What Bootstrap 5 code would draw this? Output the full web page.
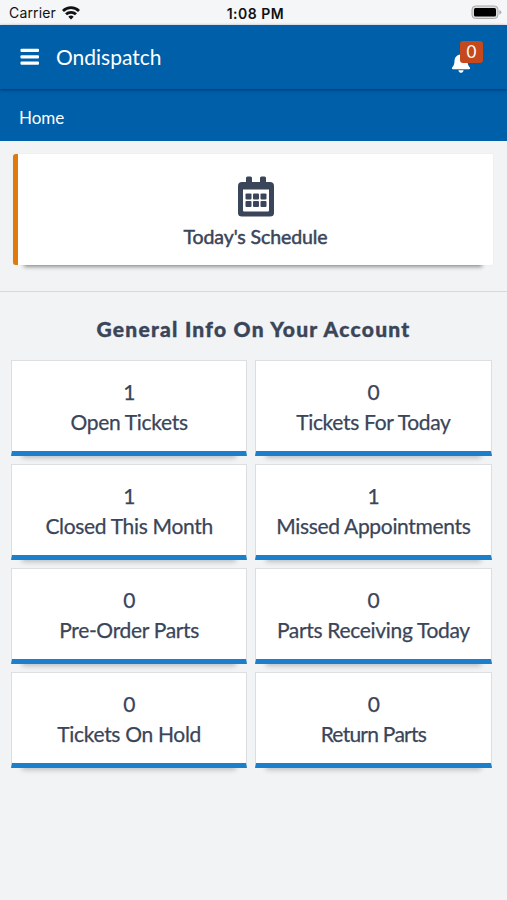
<!DOCTYPE html>
<html lang="en">
<head>
<meta charset="utf-8">
<meta name="viewport" content="width=device-width, initial-scale=1">
<title>Ondispatch</title>
<link href="https://cdn.jsdelivr.net/npm/bootstrap@5.3.0/dist/css/bootstrap.min.css" rel="stylesheet">
<style>
body{background:#f1f3f5;color:#3a4559;font-family:Lato,"Liberation Sans",sans-serif;min-height:900px;overflow-x:hidden}
.status{height:25px;background:#f5f6f8;color:#111;font:14px/27px Inter,sans-serif;padding:0 5px 0 9px}
.status>*{flex:1 1 0}
.carrier{letter-spacing:.15px}
.clock{font-weight:600;font-size:14px;letter-spacing:.5px}
.topbar{height:64px;background:#005fa9;padding:0 24px 0 20px;box-shadow:0 1px 3px rgba(0,25,70,.6);z-index:2}
.brand{font-size:21px;line-height:30px;margin-left:16px}
.bell{width:32px;height:42px}
.bell svg{position:absolute;left:0;top:16px}
.count{position:absolute;left:9px;top:5px;width:23px;height:22px;border-radius:3px;background:#c6481d;font-size:17px;line-height:21px;text-align:center}
.crumb{height:52px;background:#005fa9;padding:5px 19px 0;font-size:17px}
.schedule{height:111px;margin:13px 14px 0 13px;background:#fff;border-left:5px solid #e07a0c;border-radius:3px 1px 1px 3px;box-shadow:0 13px 4px -11px rgba(0,0,0,.4),0 0 1px rgba(0,0,0,.15)}
.schedule svg{margin-top:22px}
.label{font-size:21px;line-height:30px;letter-spacing:-.32px;-webkit-text-stroke:.25px currentColor;white-space:nowrap}
.schedule .label{font-size:19.5px;line-height:26px;margin-top:7px;letter-spacing:-.1px;-webkit-text-stroke-width:.5px}
.rule{height:1px;background:#d5d8db;margin-top:26px}
.heading{font-size:21px;line-height:28px;font-weight:900;letter-spacing:1.25px;-webkit-text-stroke:.4px currentColor;margin:23px 0 17px}
.tiles{display:grid;grid-template-columns:1fr 1fr;gap:8px;padding:0 15.5px 0 11px}
.tile{height:96px;background:#fff;border:1px solid #dcdfe2;border-bottom:5px solid #1b7fcc;padding-top:16px;box-shadow:0 13px 5px -11px rgba(0,0,0,.22)}
.tile:last-child{letter-spacing:-.75px}
</style>
<script src="https://cdn.jsdelivr.net/npm/bootstrap@5.3.0/dist/js/bootstrap.bundle.min.js"></script>
</head>
<body>
<div class="status d-flex">
  <div class="carrier d-flex align-items-center"><span>Carrier</span>
    <svg width="18" height="14" style="margin-left:6px" viewBox="0 0 18 14" fill="none" stroke="#111" stroke-width="2.8"><path d="M1 4.900a11.500 11.500 0 0 1 16 0M4 8.300a7.200 7.200 0 0 1 10 0"/><path d="M6.300 10.700a4 4 0 0 1 5.400 0L9 13.600z" fill="#111" stroke="none"/></svg>
  </div>
  <div class="clock text-center">1:08 PM</div>
  <div class="d-flex align-items-center justify-content-end">
    <svg width="31" height="15" viewBox="0 0 31 15"><rect x="1" y="1" width="26" height="12.5" rx="3.500" fill="#ddd" stroke="#aaa" stroke-width="1"/><rect x="3" y="3" width="22" height="8.500" rx="1.500"/><path d="M28.300 5v4.500q2-.7 2-2.200T28.300 5" fill="#aaa"/></svg>
  </div>
</div>
<nav class="topbar position-relative d-flex align-items-center text-white">
  <svg width="20" height="18" viewBox="0 0 20 18" fill="#fff"><rect x=".5" y=".8" width="18.500" height="3.200" rx="1"/><rect x=".5" y="7.200" width="18.500" height="3.200" rx="1"/><rect x=".5" y="13.600" width="18.500" height="3.200" rx="1"/></svg>
  <span class="brand">Ondispatch</span>
  <div class="bell position-relative ms-auto">
    <svg width="20" height="22" viewBox="0 0 20 22" fill="#fff"><path d="M9 1.500q1-1.300 2 0v1c3.500.6 5.500 3 5.500 6.300 0 3.600 1 5.200 2.400 6.700q.9 1.500-.9 1.800H2q-1.800-.3-.9-1.800C2.500 14 3.500 12.400 3.500 8.800c0-3.300 2-5.700 5.500-6.300z"/><path d="M7.300 18.300h5.400q-.4 2.700-2.700 2.700t-2.700-2.700"/></svg>
    <span class="count">0</span>
  </div>
</nav>
<div class="crumb d-flex align-items-center text-white"><span>Home</span></div>
<main>
  <section class="schedule d-flex flex-column align-items-center">
    <svg width="36" height="41" viewBox="0 0 36 41" fill="#3a4559"><path fill-rule="evenodd" d="M8 6V2q0-1.500 1.500-1.500h3Q14 .5 14 2v4h8V2q0-1.500 1.500-1.500h3Q28 .5 28 2v4h4q4 0 4 4v27q0 3.500-4 3.500H4Q0 40.500 0 37V10Q0 6 4 6zM5 13.500v21q0 1 1 1h24q1 0 1-1v-21z"/><g><rect x="7.500" y="17.500" width="6" height="6" rx="1"/><rect x="15" y="17.500" width="6" height="6" rx="1"/><rect x="22.500" y="17.500" width="6" height="6" rx="1"/><rect x="7.500" y="25" width="6" height="6" rx="1"/><rect x="15" y="25" width="6" height="6" rx="1"/><rect x="22.500" y="25" width="6" height="6" rx="1"/></g></svg>
    <div class="label">Today's Schedule</div>
  </section>
  <div class="rule"></div>
  <h1 class="heading text-center">General Info On Your Account</h1>
  <section class="tiles text-center">
    <div class="tile label"><div>1</div><div>Open Tickets</div></div>
    <div class="tile label"><div>0</div><div>Tickets For Today</div></div>
    <div class="tile label"><div>1</div><div>Closed This Month</div></div>
    <div class="tile label"><div>1</div><div>Missed Appointments</div></div>
    <div class="tile label"><div>0</div><div>Pre-Order Parts</div></div>
    <div class="tile label"><div>0</div><div>Parts Receiving Today</div></div>
    <div class="tile label"><div>0</div><div>Tickets On Hold</div></div>
    <div class="tile label"><div>0</div><div>Return Parts</div></div>
  </section>
</main>
</body>
</html>
